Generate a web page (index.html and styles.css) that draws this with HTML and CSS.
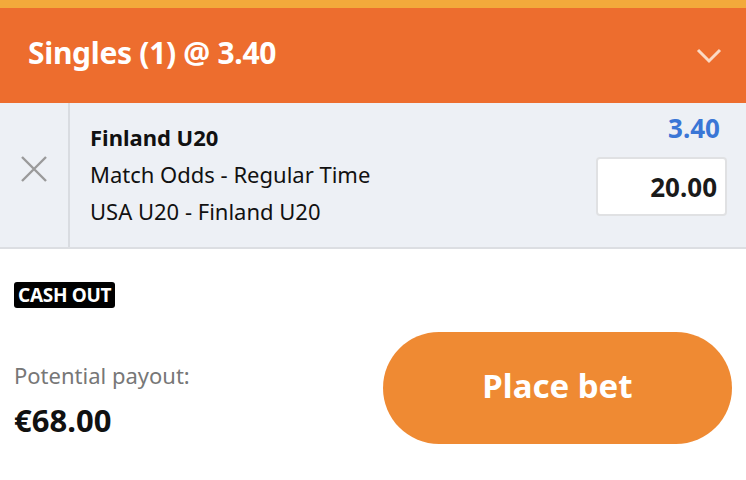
FILE: index.html
```html
<!DOCTYPE html>
<html lang="en">
<head>
    <meta charset="UTF-8">
    <meta name="viewport" content="width=device-width, initial-scale=1.0">
    <title>Betslip</title>
    <link rel="stylesheet" href="styles.css">
</head>
<body>
    <div id="betslip">
        <div class="top-strip"></div>
        <div class="slip-header">
            <h1>Singles (1) @ 3.40</h1>
            <svg class="chevron" width="26" height="16" viewBox="0 0 26 16">
                <path d="M2 2 L13 13 L24 2" fill="none" stroke="#fbd9c4" stroke-width="3"/>
            </svg>
        </div>
        <div class="bet-row">
            <div class="remove-col">
                <svg width="26" height="26" viewBox="0 0 26 26">
                    <path d="M1 1 L25 25 M25 1 L1 25" stroke="#9a9a9a" stroke-width="2.4"/>
                </svg>
            </div>
            <div class="bet-info">
                <div class="selection">Finland U20</div>
                <div class="market">Match Odds - Regular Time</div>
                <div class="event">USA U20 - Finland U20</div>
            </div>
            <div class="bet-stake">
                <div class="odds">3.40</div>
                <input type="text" class="stake-input" value="20.00">
            </div>
        </div>
        <div class="slip-footer">
            <span class="cashout-badge">CASH OUT</span>
            <div class="payout-row">
                <div class="payout">
                    <div class="payout-label">Potential payout:</div>
                    <div class="payout-value">€68.00</div>
                </div>
                <button class="place-bet">Place bet</button>
            </div>
        </div>
    </div>
</body>
</html>
```

FILE: styles.css
```css
body {
    margin: 0;
    padding: 0;
    font-family: "Noto Sans", sans-serif;
    background: #fff;
    color: #111;
}
.top-strip {
    height: 8px;
    background-color: #f3a93b;
}
.slip-header {
    height: 95px;
    box-sizing: border-box;
    background-color: #ed6d2e;
    display: flex;
    align-items: center;
    justify-content: space-between;
    padding: 0 24px 6px 28px;
}
.slip-header h1 {
    margin: 0;
    color: #fff;
    font-size: 30px;
    font-weight: 700;
    letter-spacing: -0.3px;
}
.chevron {
    margin-top: 6px;
}
.bet-row {
    display: flex;
    background-color: #edf0f5;
    border-bottom: 2px solid #dcdee2;
    height: 144px;
}
.remove-col {
    width: 70px;
    border-right: 2px solid #d9dce1;
    display: flex;
    align-items: flex-start;
    justify-content: center;
    padding-top: 53px;
    box-sizing: border-box;
}
.bet-info {
    flex: 1;
    padding: 16px 0 0 20px;
    font-size: 22px;
    line-height: 37px;
}
.selection {
    font-weight: 700;
}
.bet-stake {
    display: flex;
    flex-direction: column;
    align-items: flex-end;
    padding: 10px 19px 0 0;
}
.odds {
    color: #3a76d6;
    font-weight: 700;
    font-size: 26px;
    line-height: 30px;
    margin-right: 7px;
}
.stake-input {
    margin-top: 14px;
    width: 131px;
    height: 59px;
    box-sizing: border-box;
    border: 2px solid #e0e1e3;
    border-radius: 4px;
    background: #fff;
    font-family: "Noto Sans", sans-serif;
    font-size: 26px;
    font-weight: 700;
    text-align: right;
    padding: 0 8px;
    color: #1a1a1a;
}
.slip-footer {
    padding: 33px 14px 0 14px;
}
.cashout-badge {
    display: inline-block;
    vertical-align: top;
    background: #000;
    color: #fff;
    font-size: 19px;
    font-weight: 700;
    line-height: 26px;
    padding: 0 4px;
    border-radius: 3px;
    letter-spacing: -0.3px;
}
.payout-row {
    display: flex;
    align-items: flex-start;
    justify-content: space-between;
    margin-top: 24px;
}
.payout {
    margin-top: 30px;
}
.payout-label {
    color: #777;
    font-size: 22px;
    line-height: 26px;
}
.payout-value {
    font-size: 31px;
    font-weight: 700;
    line-height: 36px;
    margin-top: 14px;
}
.place-bet {
    width: 349px;
    height: 112px;
    border: none;
    border-radius: 56px;
    background-color: #ef8a33;
    color: #fff;
    font-family: "Noto Sans", sans-serif;
    font-size: 33px;
    font-weight: 700;
    padding: 0 0 6px 0;
    cursor: pointer;
}
```
